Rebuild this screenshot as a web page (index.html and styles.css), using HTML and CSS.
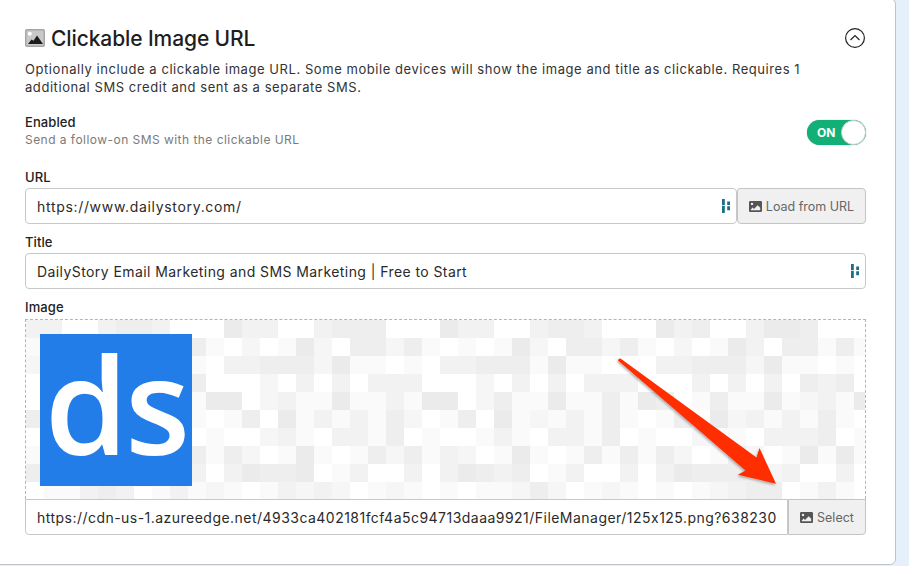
FILE: index.html
```html
<!DOCTYPE html>
<html lang="en">
<head>
    <meta charset="UTF-8">
    <meta name="viewport" content="width=device-width, initial-scale=1.0">
    <title>Clickable Image URL</title>
    <link rel="stylesheet" href="styles.css">
</head>
<body>
    <div class="card">
        <div class="card-head">
            <svg class="head-icon" viewBox="0 0 20 18" width="20" height="18">
                <rect width="20" height="18" rx="2" fill="#a6a6a6"/>
                <rect x="1.500" y="1.500" width="17" height="15" rx="1" fill="#c9c9c9"/>
                <circle cx="4.800" cy="4.800" r="2" fill="#fff"/>
                <path d="M3 15 L6.500 10.500 L8.500 11.800 L12 6.500 L18 15 Z" fill="#1c1c1c"/>
            </svg>
            <h2 class="card-title">Clickable Image URL</h2>
            <svg class="collapse-icon" viewBox="0 0 20 20" width="20" height="20">
                <circle cx="10" cy="10" r="9.400" fill="none" stroke="#222" stroke-width="1.200"/>
                <path d="M5.500 12 L10 7.500 L14.500 12" fill="none" stroke="#222" stroke-width="1.200"/>
            </svg>
        </div>
        <p class="desc">Optionally include a clickable image URL. Some mobile devices will show the image and title as clickable. Requires 1<br>additional SMS credit and sent as a separate SMS.</p>

        <div class="enable-row">
            <div>
                <div class="label">Enabled</div>
                <div class="hint">Send a follow-on SMS with the clickable URL</div>
            </div>
            <div class="toggle"><span class="toggle-text">ON</span><span class="knob"></span></div>
        </div>

        <label class="label field-label" for="url">URL</label>
        <div class="input-row">
            <div class="input-wrap joined">
                <input type="text" id="url" class="input url-input" value="https://www.dailystory.com/">
                <svg class="token-icon" viewBox="0 0 8 14" width="8" height="14"><path d="M0 0h2.800v6H0zM0 6.800h2.800V14H0zM5.200 2.500h2.800v3.500H5.200zM5.200 7.200h2.800v4H5.200z" fill="#1b6e85"/></svg>
            </div>
            <button type="button" class="side-btn load-btn">
                <svg class="pic-icon" viewBox="0 0 13 11" width="13" height="11"><path fill-rule="evenodd" d="M1.200 0h10.600A1.200 1.200 0 0 1 13 1.200v8.600A1.200 1.200 0 0 1 11.800 11H1.200A1.200 1.200 0 0 1 0 9.800V1.200A1.200 1.200 0 0 1 1.200 0zM3 1.700a1.200 1.200 0 1 0 0 2.400a1.200 1.200 0 0 0 0-2.400zM1.800 9.300h9.400V6.700L8.700 4.200L5 7.900L3.700 6.600L1.800 8.500z" fill="#555"/></svg>
                Load from URL
            </button>
        </div>

        <label class="label field-label title-label" for="title">Title</label>
        <div class="input-wrap">
            <input type="text" id="title" class="input" value="DailyStory Email Marketing and SMS Marketing | Free to Start">
            <svg class="token-icon" viewBox="0 0 8 14" width="8" height="14"><path d="M0 0h2.800v6H0zM0 6.800h2.800V14H0zM5.200 2.500h2.800v3.500H5.200zM5.200 7.200h2.800v4H5.200z" fill="#1b6e85"/></svg>
        </div>

        <div class="label field-label image-label">Image</div>
        <div class="image-box">
            <div class="mosaic" id="mosaic"></div>
            <div class="logo">ds</div>
        </div>
        <div class="input-row">
            <input type="text" class="input file-input" value="https://cdn-us-1.azureedge.net/4933ca402181fcf4a5c94713daaa9921/FileManager/125x125.png?638230">
            <button type="button" class="side-btn select-btn">
                <svg class="pic-icon" viewBox="0 0 13 11" width="13" height="11"><path fill-rule="evenodd" d="M1.200 0h10.600A1.200 1.200 0 0 1 13 1.200v8.600A1.200 1.200 0 0 1 11.800 11H1.200A1.200 1.200 0 0 1 0 9.800V1.200A1.200 1.200 0 0 1 1.200 0zM3 1.700a1.200 1.200 0 1 0 0 2.400a1.200 1.200 0 0 0 0-2.400zM1.800 9.300h9.400V6.700L8.700 4.200L5 7.900L3.700 6.600L1.800 8.500z" fill="#555"/></svg>
                Select
            </button>
        </div>
    </div>

    <!-- red annotation arrow drawn over the screenshot -->
    <svg class="arrow" viewBox="0 0 909 566" width="909" height="566">
        <defs>
            <filter id="arrowShadow" x="-10%" y="-10%" width="120%" height="120%">
                <feDropShadow dx="-1" dy="1.500" stdDeviation="0.800" flood-color="#000" flood-opacity="0.300"/>
            </filter>
        </defs>
        <path d="M618 360.500 Q618.500 358 620.500 358.500 L756.500 457.500 L759.500 448 L776 483.700 L738 474.700 L745.500 470.500 Z" fill="#ff2d00" filter="url(#arrowShadow)"/>
    </svg>
    <script src="mosaic.js"></script>
</body>
</html>
```

FILE: styles.css
```css
* {
    padding: 0;
    margin: 0;
    box-sizing: border-box;
}
body {
    font-family: Inter, "Noto Sans", sans-serif;
    background: #e6f0fb;
    overflow: hidden;
    height: 566px;
    position: relative;
}
.card {
    width: 906px;
    margin: -2px 0 0 -10px;
    padding: 27px 29px 29px 34px;
    background: #fff;
    border: 1px solid #bcc2c8;
    border-radius: 6px;
}
.card-head {
    display: flex;
    align-items: center;
    height: 24px;
}
.head-icon {
    margin-right: 6px;
}
.card-title {
    font-size: 21px;
    font-weight: 500;
    color: #1e1e1e;
    letter-spacing: -0.1px;
}
.collapse-icon {
    margin-left: auto;
    margin-right: 1px;
}
.desc {
    margin-top: 10px;
    font-size: 13px;
    line-height: 18px;
    color: #333;
    letter-spacing: 0.56px;
}
.enable-row {
    display: flex;
    justify-content: space-between;
    align-items: center;
    margin-top: 18px;
    height: 34px;
}
.label {
    font-size: 13px;
    line-height: 17px;
    font-weight: 500;
    color: #222;
    letter-spacing: 0.1px;
}
.hint {
    font-size: 12px;
    line-height: 17px;
    color: #7a7a7a;
    letter-spacing: 0.46px;
}
.toggle {
    display: flex;
    align-items: center;
    justify-content: space-between;
    width: 59px;
    height: 25px;
    margin-top: 3px;
    padding-left: 10px;
    background: #12b076;
    border-radius: 13px;
    box-shadow: 0 0 1px #888;
}
.toggle-text {
    font-size: 12px;
    font-weight: 700;
    color: #fff;
}
.knob {
    width: 25px;
    height: 25px;
    background: #fff;
    border: 1px solid #ccc;
    border-radius: 50%;
}
.field-label {
    display: block;
    margin-top: 21px;
    margin-bottom: 2px;
}
.title-label {
    margin-top: 10px;
}
.image-label {
    margin-top: 10px;
    margin-bottom: 3px;
}
.input-row {
    display: flex;
}
.input-wrap {
    position: relative;
    flex: 1;
}
.input {
    display: block;
    width: 100%;
    height: 36px;
    padding: 0 30px 0 11px;
    font-family: Inter, "Noto Sans", sans-serif;
    font-size: 14px;
    color: #2a2a2a;
    letter-spacing: 0.42px;
    border: 1px solid #c8c8c8;
    border-radius: 4px;
    background: #fff;
    outline: none;
}
.url-input {
    letter-spacing: 0.68px;
}
.token-icon {
    position: absolute;
    right: 7px;
    top: 11px;
}
.side-btn {
    display: flex;
    align-items: center;
    justify-content: center;
    gap: 4px;
    height: 36px;
    font-family: Inter, "Noto Sans", sans-serif;
    font-size: 12.500px;
    color: #666;
    background: #f0f0f0;
    border: 1px solid #c4c4c4;
    border-radius: 4px;
}
.load-btn {
    width: 129px;
    border-top-left-radius: 3px;
}
.select-btn {
    width: 78px;
    border-radius: 0 0 4px 0;
}
.image-box {
    position: relative;
    height: 180px;
    padding: 14px;
    border: 1px dashed #b4b4b4;
    border-bottom: none;
    overflow: hidden;
}
.mosaic {
    position: absolute;
    top: 0;
    left: 0;
    display: grid;
    grid-template-columns: repeat(47, 18px);
    grid-auto-rows: 18px;
}
.cell-a { background: #fff; }
.cell-b { background: #fafafa; }
.cell-c { background: #f6f6f6; }
.cell-d { background: #f2f2f2; }
.cell-e { background: #eeeeee; }
.cell-f { background: #ebebeb; }
.logo {
    position: relative;
    width: 152px;
    height: 152px;
    padding-bottom: 14px;
    background: #227de8;
    color: #fff;
    font-family: "Open Sans", sans-serif;
    font-size: 134px;
    font-weight: 600;
    line-height: 138px;
    letter-spacing: -3px;
    text-align: center;
}
.file-input {
    flex: 1;
    padding-right: 8px;
    letter-spacing: 0.47px;
    border-radius: 0 0 0 4px;
}
.arrow {
    position: absolute;
    top: 0;
    left: 0;
    pointer-events: none;
}
```

FILE: mosaic.js
```js
// placeholder tile pattern behind the preview, one letter per 18px cell
const rows = [
    'ddaadeedaaafddaadeeeaaafddaadeedaaafdeaadffeaaa',
    'baaaaaaaaebacabfcaeecebababfcaeecebacabfdaeebeb',
    'caaaaaaaabaddeeecfbbabaddeeebfbbaaaddeeecfbbaba',
    'aaaaaaaaaeaaacadadadddaaacadadadddaaadadadaedea',
    'aaaaaaaaabffacdbbfbbdbffacebbfbbebfeabebbfbcdbf',
    'eaaaaaaaababeafbdbdbecabeafbcbdbebabeafcdbdbeba',
    'aaaaaaaaaabaacdbaddbeabaabdbaddbeabaacbbadddeab',
    'baaaaaaaaebecabfbabecebdcabfbabebebecabecabfbfb',
    'eaaaaaaaadadfeefabdaadadfedeabdaadadfeeedcdaada',
    'abbdedabdbcbabdcdcabcbababbcecabcbababcdeeabdba'
];
const mosaic = document.getElementById('mosaic');
rows.forEach((row) => {
    for (const level of row) {
        const cell = document.createElement('div');
        cell.className = `cell-${level}`;
        mosaic.appendChild(cell);
    }
});
```
